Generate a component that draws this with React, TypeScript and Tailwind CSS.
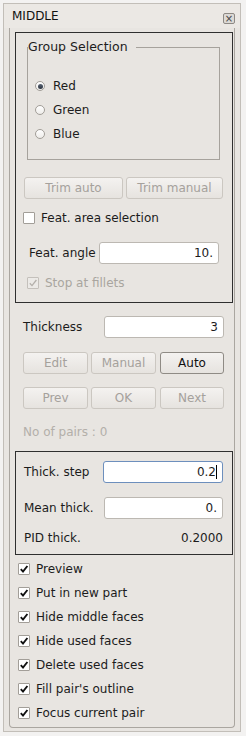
import type { ReactNode } from "react";

const Check = ({ disabled = false }: { disabled?: boolean }) => (
  <svg width="10" height="10" viewBox="0 0 10 10" className="block">
    <path
      d="M1.8 5.2 L4 7.6 L8.4 2"
      fill="none"
      stroke={disabled ? "#b4b0ab" : "#111111"}
      strokeWidth={disabled ? 1.3 : 1.9}
    />
  </svg>
);

const CheckBox = ({ checked = false, disabled = false }: { checked?: boolean; disabled?: boolean }) => (
  <div
    className={`w-[12px] h-[12px] flex items-center justify-center border rounded-[1px] ${
      disabled ? "border-[#c4c0bb] bg-[#eceae7]" : "border-[#a29e98] bg-white"
    }`}
  >
    {checked && <Check disabled={disabled} />}
  </div>
);

const Radio = ({ checked = false }: { checked?: boolean }) => (
  <div className="w-[10px] h-[10px] rounded-full border border-[#a29e98] bg-gradient-to-b from-[#ffffff] to-[#eeece9] flex items-center justify-center">
    {checked && <div className="w-[5px] h-[5px] rounded-full bg-gradient-to-b from-[#5a6574] to-[#2c3440]" />}
  </div>
);

const Btn = ({ children, w, enabled = false, ml = "" }: { children: ReactNode; w: string; enabled?: boolean; ml?: string }) => (
  <div
    className={`${w} ${ml} h-[22px] flex items-center justify-center rounded-[3px] border bg-gradient-to-b from-[#f4f2f0] to-[#e6e3df] ${
      enabled ? "border-[#8f8b85] text-[#111]" : "border-[#cbc7c1] text-[#a5a19c]"
    }`}
  >
    {children}
  </div>
);

const Field = ({ value, w, focused = false }: { value: string; w: string; focused?: boolean }) => (
  <div
    className={`${w} h-[22px] bg-white rounded-[3px] border flex items-center justify-end pr-[5px] ${
      focused ? "border-[#6d8fbd]" : "border-[#bcb8b2]"
    }`}
  >
    <span>{value}</span>
    {focused && <span className="w-px h-[14px] bg-black" />}
  </div>
);

export default function App() {
  const options = [
    "Preview",
    "Put in new part",
    "Hide middle faces",
    "Hide used faces",
    "Delete used faces",
    "Fill pair's outline",
    "Focus current pair",
  ];

  return (
    <div
      className="w-[246px] h-[736px] bg-[#f3f2f1] pt-[3px] pl-[3px] text-[12px] leading-[14px] text-[#1c1c1c]"
      style={{ fontFamily: '"DejaVu Sans", "Liberation Sans", sans-serif' }}
    >
      <div className="w-[238px] h-[729px] border border-[#c2beb8] bg-[#e8e5e1] flex flex-col">
        {/* title bar */}
        <div className="h-[24px] flex items-center justify-between pl-[8px] pr-[5px] bg-[#ebe8e4]">
          <span className="text-[#111]">MIDDLE</span>
          <div className="w-[12px] h-[11px] mt-[5px] border border-[#8d8984] rounded-[2px] bg-[#dcd9d5] flex items-center justify-center text-[10px] leading-[10px] text-[#444]">
            ×
          </div>
        </div>

        {/* panel */}
        <div className="mx-[5px] h-[700px] border-l border-r border-b border-[#aaa6a0] rounded-b-[4px] flex flex-col">
          {/* box 1 */}
          <div className="mt-[4px] ml-[5px] w-[218px] border border-[#2f2f2f] flex flex-col pb-[9px]">
            <fieldset className="mt-[7px] ml-[11px] w-[193px] border border-[#a6a29c] pt-[20px] pb-[13px]">
              <legend className="pr-[8px] text-[12.5px] leading-[14px]">Group Selection</legend>
              <div className="pl-[7px] flex flex-col">
                {[
                  ["Red", true],
                  ["Green", false],
                  ["Blue", false],
                ].map(([label, checked]) => (
                  <div key={label as string} className="h-[24px] flex items-center gap-[8px]">
                    <Radio checked={checked as boolean} />
                    <span>{label as string}</span>
                  </div>
                ))}
              </div>
            </fieldset>

            <div className="mt-[17px] ml-[8px] flex">
              <Btn w="w-[99px]">Trim auto</Btn>
              <Btn w="w-[97px]" ml="ml-[3px]">Trim manual</Btn>
            </div>

            <div className="mt-[9px] ml-[7px] h-[20px] flex items-center gap-[6px]">
              <CheckBox />
              <span>Feat. area selection</span>
            </div>

            <div className="mt-[14px] ml-[13px] h-[22px] flex items-center">
              <span className="w-[70px]">Feat. angle</span>
              <Field value="10." w="w-[120px]" />
            </div>

            <div className="mt-[9px] ml-[11px] h-[20px] flex items-center gap-[6px] text-[#a9a59f]">
              <CheckBox checked disabled />
              <span>Stop at fillets</span>
            </div>
          </div>

          {/* thickness */}
          <div className="mt-[13px] ml-[13px] h-[22px] flex items-center">
            <span className="w-[81px]">Thickness</span>
            <Field value="3" w="w-[120px]" />
          </div>

          <div className="mt-[14px] ml-[13px] flex">
            <Btn w="w-[65px]">Edit</Btn>
            <Btn w="w-[65px]" ml="ml-[3px]">Manual</Btn>
            <Btn w="w-[64px]" ml="ml-[4px]" enabled>Auto</Btn>
          </div>

          <div className="mt-[13px] ml-[13px] flex">
            <Btn w="w-[65px]">Prev</Btn>
            <Btn w="w-[65px]" ml="ml-[3px]">OK</Btn>
            <Btn w="w-[64px]" ml="ml-[4px]">Next</Btn>
          </div>

          <div className="mt-[16px] ml-[13px] text-[#b3afa9]">No of pairs : 0</div>

          {/* box 2 */}
          <div className="mt-[12px] ml-[5px] w-[218px] border border-[#2f2f2f] flex flex-col pb-[9px]">
            <div className="mt-[9px] ml-[8px] h-[22px] flex items-center">
              <span className="w-[79px]">Thick. step</span>
              <Field value="0.2" w="w-[120px]" focused />
            </div>
            <div className="mt-[14px] ml-[8px] h-[22px] flex items-center">
              <span className="w-[80px]">Mean thick.</span>
              <Field value="0." w="w-[119px]" />
            </div>
            <div className="mt-[12px] ml-[8px] mr-[9px] flex justify-between">
              <span>PID thick.</span>
              <span>0.2000</span>
            </div>
          </div>

          {/* options */}
          <div className="mt-[2px] ml-[8px] flex flex-col">
            {options.map((o) => (
              <div key={o} className="h-[24px] flex items-center gap-[6px]">
                <CheckBox checked />
                <span>{o}</span>
              </div>
            ))}
          </div>
        </div>
      </div>
    </div>
  );
}
